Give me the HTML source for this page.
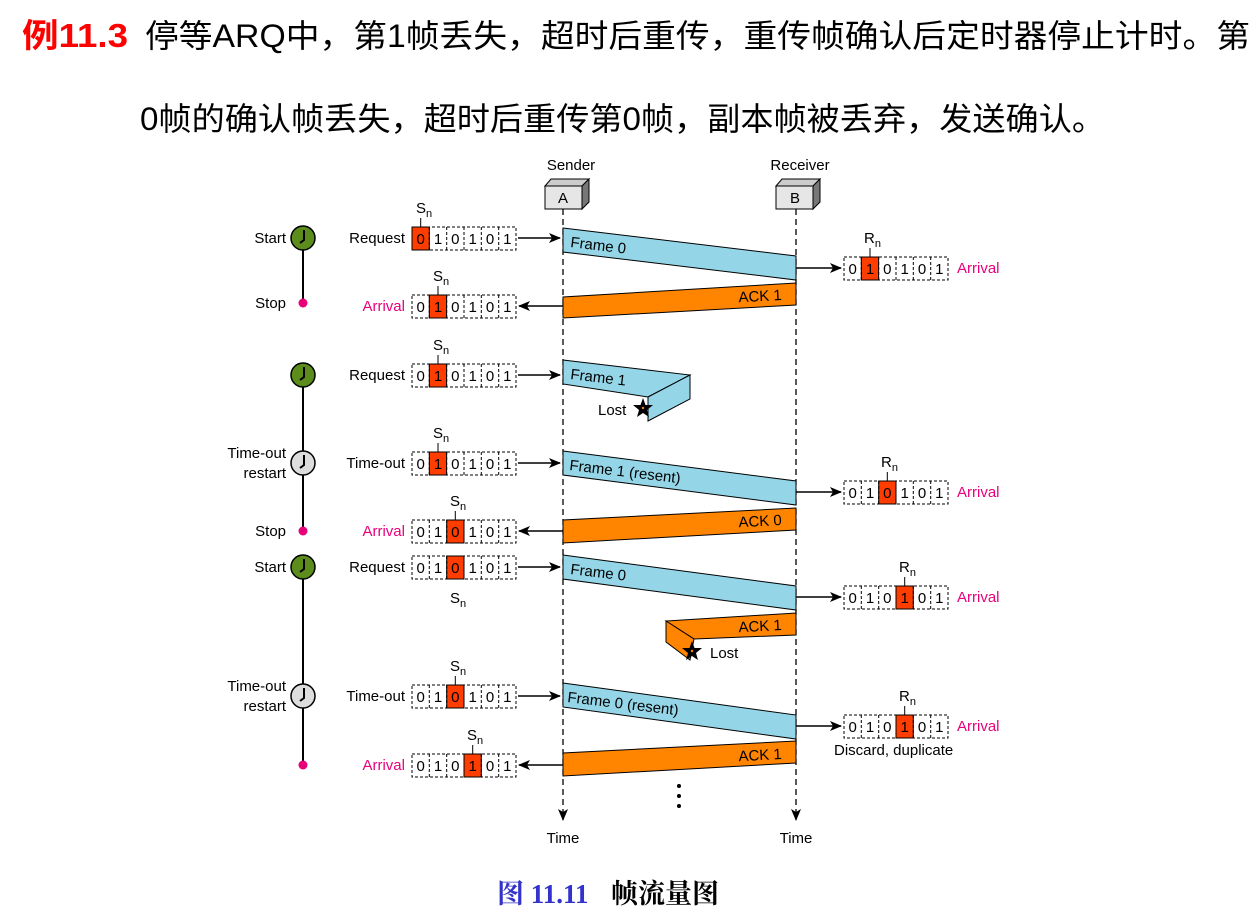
<!DOCTYPE html>
<html><head><meta charset="utf-8"><style>
html,body{margin:0;padding:0;background:#fff;}
svg{display:block;}
text{font-family:"Liberation Sans","Noto Sans CJK SC",sans-serif;}
</style></head><body>
<svg width="1260" height="918" viewBox="0 0 1260 918" xmlns="http://www.w3.org/2000/svg">
<defs>
<marker id="ar" markerWidth="12" markerHeight="10" refX="11" refY="5" orient="auto" markerUnits="userSpaceOnUse">
<path d="M0,0 L12,5 L0,10 L3,5 Z" fill="#000"/></marker>
<g id="cells">
<rect x="0" y="0" width="104" height="23" fill="none" stroke="#000" stroke-dasharray="3,2"/>
<path d="M17.3,0V23M34.7,0V23M52,0V23M69.3,0V23M86.7,0V23" stroke="#000" stroke-dasharray="3,2"/>
</g>
<g id="clockG"><circle r="12" fill="#5b8c1c" stroke="#000" stroke-width="1.5"/><path d="M1,-8 L1,2 L-3,5" stroke="#000" stroke-width="2" fill="none"/></g>
<g id="clockY"><circle r="12" fill="#ddd" stroke="#000" stroke-width="1.5"/><path d="M1,-8 L1,2 L-3,5" stroke="#000" stroke-width="2" fill="none"/></g>
<path id="star" d="M0,-10 L2.5,-3 L10,-3 L4,2 L6,9 L0,5 L-6,9 L-4,2 L-10,-3 L-2.5,-3 Z"/>
</defs>

<text x="22" y="47" font-size="33" font-weight="bold" fill="#f00" textLength="106" lengthAdjust="spacingAndGlyphs">例11.3</text>
<text x="145" y="47" font-size="32" textLength="1105" lengthAdjust="spacingAndGlyphs" fill="#000">停等ARQ中，第1帧丢失，超时后重传，重传帧确认后定时器停止计时。第</text>
<text x="140" y="130" font-size="32" textLength="965" lengthAdjust="spacingAndGlyphs" fill="#000">0帧的确认帧丢失，超时后重传第0帧，副本帧被丢弃，发送确认。</text>

<text x="497" y="903" font-size="27" font-weight="bold" fill="#3333cc" style="font-family:'Liberation Serif','Noto Serif CJK SC',serif">图 11.11</text>
<text x="611" y="903" font-size="27" font-weight="bold" fill="#000" style="font-family:'Liberation Serif','Noto Serif CJK SC',serif">帧流量图</text>

<g font-size="15" fill="#000">
<text x="571" y="170" text-anchor="middle">Sender</text>
<text x="800" y="170" text-anchor="middle">Receiver</text>
<path d="M545,186 L551,179 L589,179 L582,186 Z" fill="#ccc" stroke="#000"/>
<path d="M582,186 L589,179 L589,202 L582,209 Z" fill="#777" stroke="#000"/>
<rect x="545" y="186" width="37" height="23" fill="#e6e6e6" stroke="#000"/>
<text x="563" y="203" text-anchor="middle">A</text>
<path d="M776,186 L782,179 L820,179 L813,186 Z" fill="#ccc" stroke="#000"/>
<path d="M813,186 L820,179 L820,202 L813,209 Z" fill="#777" stroke="#000"/>
<rect x="776" y="186" width="37" height="23" fill="#e6e6e6" stroke="#000"/>
<text x="795" y="203" text-anchor="middle">B</text>

<line x1="563" y1="209" x2="563" y2="820" stroke="#000" stroke-width="1.3" stroke-dasharray="6,4" marker-end="url(#ar)"/>
<line x1="796" y1="209" x2="796" y2="820" stroke="#000" stroke-width="1.3" stroke-dasharray="6,4" marker-end="url(#ar)"/>
<text x="563" y="843" text-anchor="middle">Time</text>
<text x="796" y="843" text-anchor="middle">Time</text>
<circle cx="679" cy="786" r="2"/><circle cx="679" cy="796" r="2"/><circle cx="679" cy="806" r="2"/>

<polygon points="563,228 796,256 796,280 563,252" fill="#94d6e8" stroke="#000"/>
<text transform="translate(570,247) rotate(6.8)">Frame 0</text>
<polygon points="796,283 796,305 563,318 563,297" fill="#ff8400" stroke="#000"/>
<text x="782" y="300" text-anchor="end" transform="rotate(-3 782 300)">ACK 1</text>

<polygon points="563,360 690,375 648,397 563,384" fill="#94d6e8" stroke="#000"/>
<polygon points="648,397 690,375 690,399 648,421" fill="#94d6e8" stroke="#000"/>
<text transform="translate(570,379) rotate(6.8)">Frame 1</text>
<use href="#star" transform="translate(643,408)"/>
<circle cx="643" cy="408" r="1.2" fill="#ff8400"/>
<text x="598" y="415">Lost</text>

<polygon points="563,451 796,481 796,505 563,475" fill="#94d6e8" stroke="#000"/>
<text transform="translate(569,470) rotate(6.8)">Frame 1 (resent)</text>
<polygon points="796,508 796,530 563,543 563,520" fill="#ff8400" stroke="#000"/>
<text x="782" y="525" text-anchor="end" transform="rotate(-3 782 525)">ACK 0</text>

<polygon points="563,555 796,586 796,610 563,579" fill="#94d6e8" stroke="#000"/>
<text transform="translate(570,574) rotate(6.8)">Frame 0</text>
<polygon points="796,613 796,635 694,639 666,621" fill="#ff8400" stroke="#000"/>
<polygon points="666,621 694,639 690,660 666,642" fill="#ff8400" stroke="#000"/>
<text x="782" y="630" text-anchor="end" transform="rotate(-3 782 630)">ACK 1</text>
<use href="#star" transform="translate(692,651)"/>
<circle cx="692" cy="651" r="1.2" fill="#ff8400"/>
<text x="710" y="658">Lost</text>

<polygon points="563,683 796,715 796,739 563,707" fill="#94d6e8" stroke="#000"/>
<text transform="translate(567,702) rotate(6.8)">Frame 0 (resent)</text>
<polygon points="796,741 796,763 563,776 563,753" fill="#ff8400" stroke="#000"/>
<text x="782" y="759" text-anchor="end" transform="rotate(-3 782 759)">ACK 1</text>

<line x1="303" y1="238" x2="303" y2="303" stroke="#000" stroke-width="2"/>
<line x1="303" y1="375" x2="303" y2="531" stroke="#000" stroke-width="2"/>
<line x1="303" y1="567" x2="303" y2="765" stroke="#000" stroke-width="2"/>
<use href="#clockG" x="303" y="238"/>
<use href="#clockG" x="303" y="375"/>
<use href="#clockY" x="303" y="463"/>
<use href="#clockG" x="303" y="567"/>
<use href="#clockY" x="303" y="696"/>
<circle cx="303" cy="303" r="4.5" fill="#e8007a"/>
<circle cx="303" cy="531" r="4.5" fill="#e8007a"/>
<circle cx="303" cy="765" r="4.5" fill="#e8007a"/>
<text x="286" y="243" text-anchor="end">Start</text>
<text x="286" y="308" text-anchor="end">Stop</text>
<text x="286" y="458" text-anchor="end">Time-out</text>
<text x="286" y="478" text-anchor="end">restart</text>
<text x="286" y="536" text-anchor="end">Stop</text>
<text x="286" y="572" text-anchor="end">Start</text>
<text x="286" y="691" text-anchor="end">Time-out</text>
<text x="286" y="711" text-anchor="end">restart</text>

<g transform="translate(412,227)"><rect x="0" y="0" width="17.3" height="23" fill="#ff3d00" stroke="#000"/><use href="#cells"/>
<text x="8.7" y="17" text-anchor="middle">0</text><text x="26" y="17" text-anchor="middle">1</text><text x="43.3" y="17" text-anchor="middle">0</text><text x="60.7" y="17" text-anchor="middle">1</text><text x="78" y="17" text-anchor="middle">0</text><text x="95.3" y="17" text-anchor="middle">1</text>
<line x1="8.7" y1="0" x2="8.7" y2="-9" stroke="#000"/><text x="4" y="-14">S<tspan font-size="11" dy="4">n</tspan></text></g>
<text x="405" y="243" text-anchor="end">Request</text>
<line x1="518" y1="238" x2="560" y2="238" stroke="#000" stroke-width="1.5" marker-end="url(#ar)"/>

<g transform="translate(412,295)"><rect x="17.3" y="0" width="17.3" height="23" fill="#ff3d00" stroke="#000"/><use href="#cells"/>
<text x="8.7" y="17" text-anchor="middle">0</text><text x="26" y="17" text-anchor="middle">1</text><text x="43.3" y="17" text-anchor="middle">0</text><text x="60.7" y="17" text-anchor="middle">1</text><text x="78" y="17" text-anchor="middle">0</text><text x="95.3" y="17" text-anchor="middle">1</text>
<line x1="26" y1="0" x2="26" y2="-9" stroke="#000"/><text x="21" y="-14">S<tspan font-size="11" dy="4">n</tspan></text></g>
<text x="405" y="311" text-anchor="end" fill="#e8007a">Arrival</text>
<line x1="563" y1="306" x2="519" y2="306" stroke="#000" stroke-width="1.5" marker-end="url(#ar)"/>

<g transform="translate(412,364)"><rect x="17.3" y="0" width="17.3" height="23" fill="#ff3d00" stroke="#000"/><use href="#cells"/>
<text x="8.7" y="17" text-anchor="middle">0</text><text x="26" y="17" text-anchor="middle">1</text><text x="43.3" y="17" text-anchor="middle">0</text><text x="60.7" y="17" text-anchor="middle">1</text><text x="78" y="17" text-anchor="middle">0</text><text x="95.3" y="17" text-anchor="middle">1</text>
<line x1="26" y1="0" x2="26" y2="-9" stroke="#000"/><text x="21" y="-14">S<tspan font-size="11" dy="4">n</tspan></text></g>
<text x="405" y="380" text-anchor="end">Request</text>
<line x1="518" y1="375" x2="560" y2="375" stroke="#000" stroke-width="1.5" marker-end="url(#ar)"/>

<g transform="translate(412,452)"><rect x="17.3" y="0" width="17.3" height="23" fill="#ff3d00" stroke="#000"/><use href="#cells"/>
<text x="8.7" y="17" text-anchor="middle">0</text><text x="26" y="17" text-anchor="middle">1</text><text x="43.3" y="17" text-anchor="middle">0</text><text x="60.7" y="17" text-anchor="middle">1</text><text x="78" y="17" text-anchor="middle">0</text><text x="95.3" y="17" text-anchor="middle">1</text>
<line x1="26" y1="0" x2="26" y2="-9" stroke="#000"/><text x="21" y="-14">S<tspan font-size="11" dy="4">n</tspan></text></g>
<text x="405" y="468" text-anchor="end">Time-out</text>
<line x1="518" y1="463" x2="560" y2="463" stroke="#000" stroke-width="1.5" marker-end="url(#ar)"/>

<g transform="translate(412,520)"><rect x="34.7" y="0" width="17.3" height="23" fill="#ff3d00" stroke="#000"/><use href="#cells"/>
<text x="8.7" y="17" text-anchor="middle">0</text><text x="26" y="17" text-anchor="middle">1</text><text x="43.3" y="17" text-anchor="middle">0</text><text x="60.7" y="17" text-anchor="middle">1</text><text x="78" y="17" text-anchor="middle">0</text><text x="95.3" y="17" text-anchor="middle">1</text>
<line x1="43.3" y1="0" x2="43.3" y2="-9" stroke="#000"/><text x="38" y="-14">S<tspan font-size="11" dy="4">n</tspan></text></g>
<text x="405" y="536" text-anchor="end" fill="#e8007a">Arrival</text>
<line x1="563" y1="531" x2="519" y2="531" stroke="#000" stroke-width="1.5" marker-end="url(#ar)"/>

<g transform="translate(412,556)"><rect x="34.7" y="0" width="17.3" height="23" fill="#ff3d00" stroke="#000"/><use href="#cells"/>
<text x="8.7" y="17" text-anchor="middle">0</text><text x="26" y="17" text-anchor="middle">1</text><text x="43.3" y="17" text-anchor="middle">0</text><text x="60.7" y="17" text-anchor="middle">1</text><text x="78" y="17" text-anchor="middle">0</text><text x="95.3" y="17" text-anchor="middle">1</text>
<text x="38" y="47">S<tspan font-size="11" dy="4">n</tspan></text></g>
<text x="405" y="572" text-anchor="end">Request</text>
<line x1="518" y1="567" x2="560" y2="567" stroke="#000" stroke-width="1.5" marker-end="url(#ar)"/>

<g transform="translate(412,685)"><rect x="34.7" y="0" width="17.3" height="23" fill="#ff3d00" stroke="#000"/><use href="#cells"/>
<text x="8.7" y="17" text-anchor="middle">0</text><text x="26" y="17" text-anchor="middle">1</text><text x="43.3" y="17" text-anchor="middle">0</text><text x="60.7" y="17" text-anchor="middle">1</text><text x="78" y="17" text-anchor="middle">0</text><text x="95.3" y="17" text-anchor="middle">1</text>
<line x1="43.3" y1="0" x2="43.3" y2="-9" stroke="#000"/><text x="38" y="-14">S<tspan font-size="11" dy="4">n</tspan></text></g>
<text x="405" y="701" text-anchor="end">Time-out</text>
<line x1="518" y1="696" x2="560" y2="696" stroke="#000" stroke-width="1.5" marker-end="url(#ar)"/>

<g transform="translate(412,754)"><rect x="52" y="0" width="17.3" height="23" fill="#ff3d00" stroke="#000"/><use href="#cells"/>
<text x="8.7" y="17" text-anchor="middle">0</text><text x="26" y="17" text-anchor="middle">1</text><text x="43.3" y="17" text-anchor="middle">0</text><text x="60.7" y="17" text-anchor="middle">1</text><text x="78" y="17" text-anchor="middle">0</text><text x="95.3" y="17" text-anchor="middle">1</text>
<line x1="60.7" y1="0" x2="60.7" y2="-9" stroke="#000"/><text x="55" y="-14">S<tspan font-size="11" dy="4">n</tspan></text></g>
<text x="405" y="770" text-anchor="end" fill="#e8007a">Arrival</text>
<line x1="563" y1="765" x2="519" y2="765" stroke="#000" stroke-width="1.5" marker-end="url(#ar)"/>

<g transform="translate(844,257)"><rect x="17.3" y="0" width="17.3" height="23" fill="#ff3d00" stroke="#000"/><use href="#cells"/>
<text x="8.7" y="17" text-anchor="middle">0</text><text x="26" y="17" text-anchor="middle">1</text><text x="43.3" y="17" text-anchor="middle">0</text><text x="60.7" y="17" text-anchor="middle">1</text><text x="78" y="17" text-anchor="middle">0</text><text x="95.3" y="17" text-anchor="middle">1</text>
<line x1="26" y1="0" x2="26" y2="-9" stroke="#000"/><text x="20" y="-14">R<tspan font-size="11" dy="4">n</tspan></text></g>
<text x="957" y="273" fill="#e8007a">Arrival</text>
<line x1="796" y1="268" x2="841" y2="268" stroke="#000" stroke-width="1.5" marker-end="url(#ar)"/>

<g transform="translate(844,481)"><rect x="34.7" y="0" width="17.3" height="23" fill="#ff3d00" stroke="#000"/><use href="#cells"/>
<text x="8.7" y="17" text-anchor="middle">0</text><text x="26" y="17" text-anchor="middle">1</text><text x="43.3" y="17" text-anchor="middle">0</text><text x="60.7" y="17" text-anchor="middle">1</text><text x="78" y="17" text-anchor="middle">0</text><text x="95.3" y="17" text-anchor="middle">1</text>
<line x1="43.3" y1="0" x2="43.3" y2="-9" stroke="#000"/><text x="37" y="-14">R<tspan font-size="11" dy="4">n</tspan></text></g>
<text x="957" y="497" fill="#e8007a">Arrival</text>
<line x1="796" y1="492" x2="841" y2="492" stroke="#000" stroke-width="1.5" marker-end="url(#ar)"/>

<g transform="translate(844,586)"><rect x="52" y="0" width="17.3" height="23" fill="#ff3d00" stroke="#000"/><use href="#cells"/>
<text x="8.7" y="17" text-anchor="middle">0</text><text x="26" y="17" text-anchor="middle">1</text><text x="43.3" y="17" text-anchor="middle">0</text><text x="60.7" y="17" text-anchor="middle">1</text><text x="78" y="17" text-anchor="middle">0</text><text x="95.3" y="17" text-anchor="middle">1</text>
<line x1="60.7" y1="0" x2="60.7" y2="-9" stroke="#000"/><text x="55" y="-14">R<tspan font-size="11" dy="4">n</tspan></text></g>
<text x="957" y="602" fill="#e8007a">Arrival</text>
<line x1="796" y1="597" x2="841" y2="597" stroke="#000" stroke-width="1.5" marker-end="url(#ar)"/>

<g transform="translate(844,715)"><rect x="52" y="0" width="17.3" height="23" fill="#ff3d00" stroke="#000"/><use href="#cells"/>
<text x="8.7" y="17" text-anchor="middle">0</text><text x="26" y="17" text-anchor="middle">1</text><text x="43.3" y="17" text-anchor="middle">0</text><text x="60.7" y="17" text-anchor="middle">1</text><text x="78" y="17" text-anchor="middle">0</text><text x="95.3" y="17" text-anchor="middle">1</text>
<line x1="60.7" y1="0" x2="60.7" y2="-9" stroke="#000"/><text x="55" y="-14">R<tspan font-size="11" dy="4">n</tspan></text></g>
<text x="957" y="731" fill="#e8007a">Arrival</text>
<line x1="796" y1="726" x2="841" y2="726" stroke="#000" stroke-width="1.5" marker-end="url(#ar)"/>
<text x="834" y="755">Discard, duplicate</text>
</g>
</svg>
</body></html>
